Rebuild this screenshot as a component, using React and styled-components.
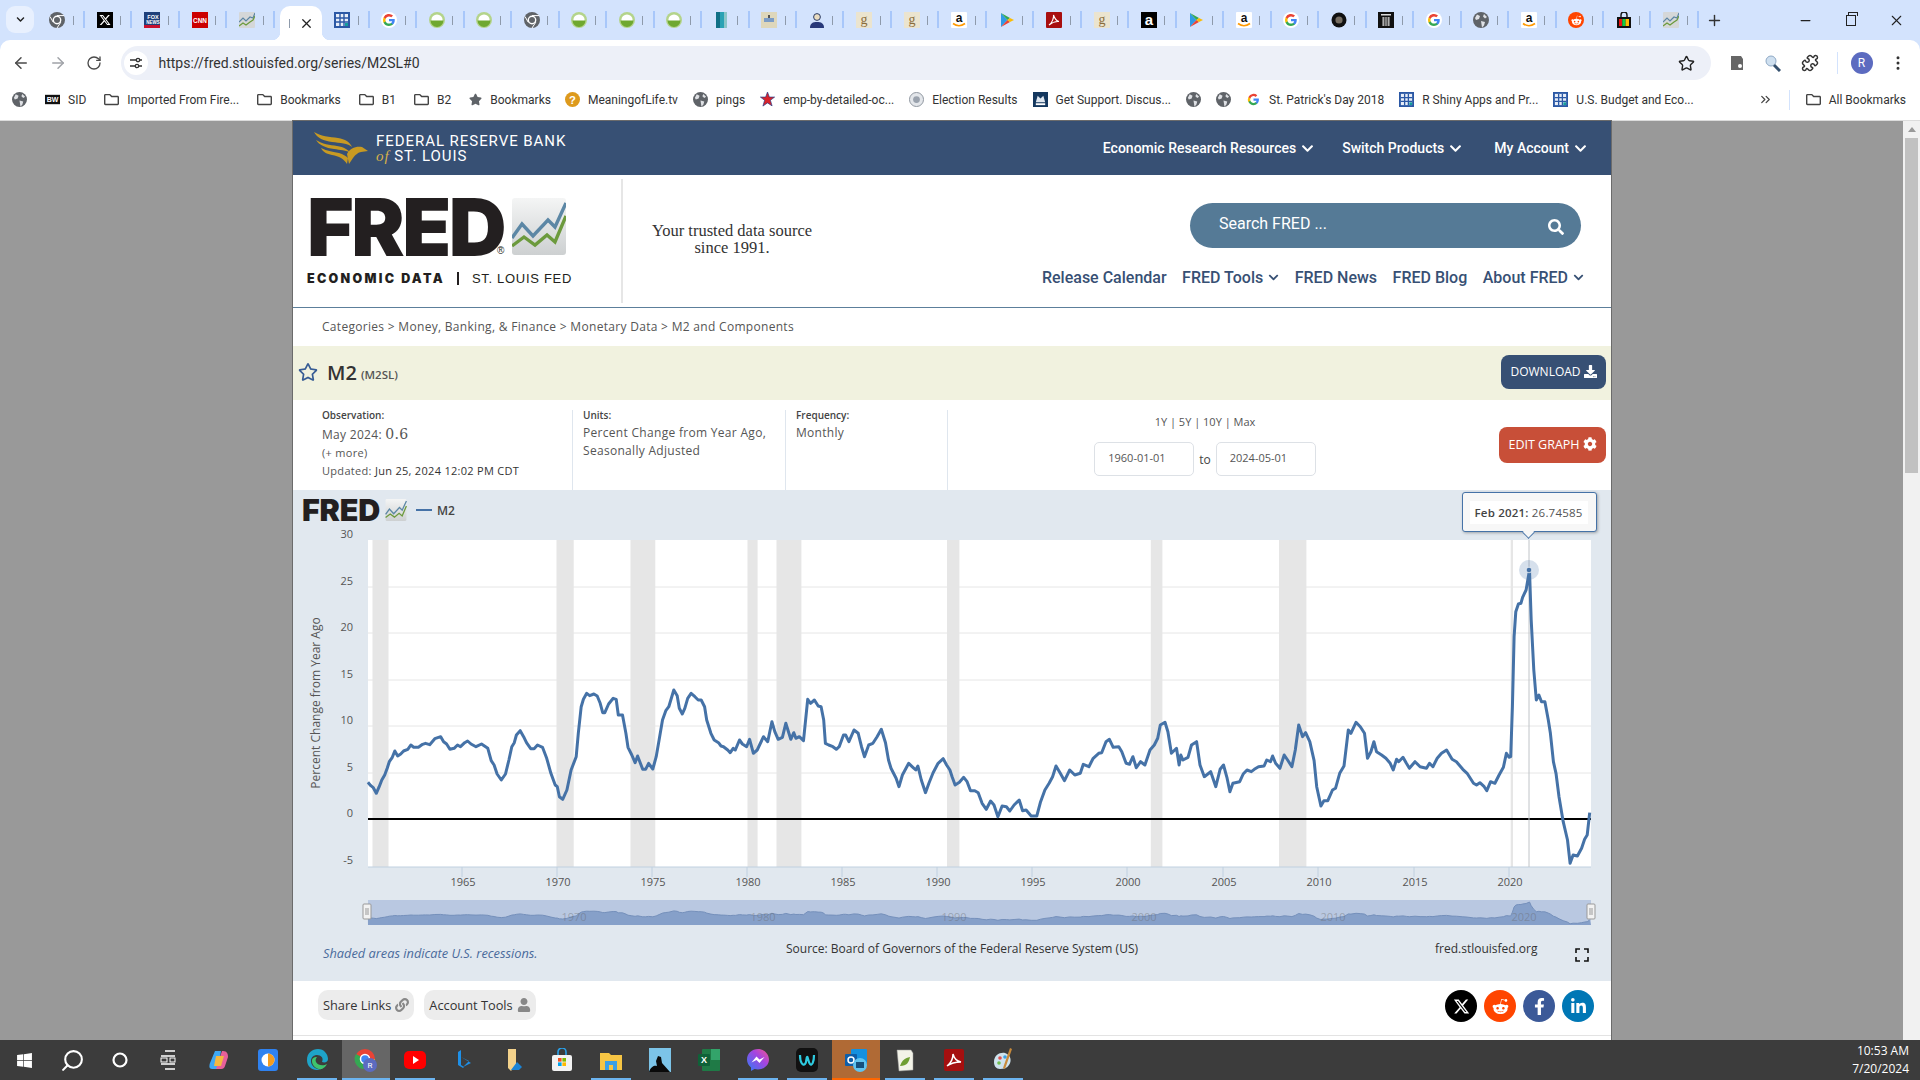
import React from 'react';
import styled, { createGlobalStyle } from 'styled-components';
import {
  FaChevronDown, FaSearch, FaRegStar, FaDownload, FaCog, FaLink, FaUser,
  FaRedditAlien, FaFacebookF, FaLinkedinIn, FaStar, FaRegFolder, FaWindows,
} from 'react-icons/fa';
import { FaXTwitter } from 'react-icons/fa6';
import { ArrowLeft, ArrowRight, RotateCw, Star, MoreVertical, Minus, Plus, X, Search, Puzzle, ChevronsRight } from 'lucide-react';

const GlobalStyle = createGlobalStyle`
  html, body { margin: 0; padding: 0; }
  body { width: 1920px; height: 1080px; overflow: hidden; font-family: "Open Sans", sans-serif; background: #999; }
  * { box-sizing: border-box; }
`;

// traced off the graph, in page pixels once toPage has run
const traceLeft = [[185,787],[192,797],[198,803],[205,820],[212,800],[218,780],[225,765],[231,745],[236,725],[243,712],[249,693],[256,708],[263,702],[270,693],[280,688],[287,675],[294,682],[305,682],[315,673],[322,670],[332,674],[344,656],[358,650],[365,665],[372,672],[380,688],[390,685],[398,675],[405,680],[415,668],[422,663],[430,672],[442,680],[455,672],[470,685],[478,722],[485,735],[492,762],[502,780],[512,762],[520,720],[527,680],[533,668],[538,645],[547,632],[555,650],[562,668],[572,686],[580,686],[588,675],[600,682],[610,715],[620,760],[630,795],[635,800],[640,830],[648,838],[658,810],[668,750],[680,710],[685,640],[692,560],[697,538],[705,520],[712,527],[722,522],[730,528],[737,550],[743,578],[748,578],[757,552],[768,535],[775,538],[780,585],[790,585],[798,640],[803,682],[812,705],[820,728],[826,708],[832,728],[838,748],[845,748],[852,730],[862,747],[870,710],[877,660],[885,600],[893,572],[900,560],[912,510],[920,527],[925,565],[932,582],[938,565],[945,535],[953,520],[962,530],[970,540],[977,540],[985,560],[990,600],[1000,640],[1008,660],[1018,668],[1024,678],[1030,680],[1040,690],[1046,698],[1053,685],[1058,690],[1068,660],[1075,672],[1085,680],[1092,658],[1101,700],[1110,690],[1125,650],[1135,665],[1145,605],[1152,635],[1160,658],[1170,652],[1178,610],[1190,658],[1197,638],[1202,655],[1210,650],[1220,662],[1230,538],[1237,550],[1246,540],[1255,558],[1262,560],[1268,600],[1272,670],[1280,675],[1290,680],[1298,688],[1305,680],[1315,645],[1320,645],[1328,665],[1340,630],[1350,640],[1358,680],[1365,710],[1375,675],[1385,670],[1395,650],[1405,628],[1415,668],[1422,720],[1428,745],[1440,775],[1447,800],[1455,765],[1470,730],[1480,742],[1487,750],[1492,738],[1500,780],[1510,818],[1518,790],[1528,758],[1540,730],[1552,716],[1560,735],[1568,750]];
const traceRight = [[5,770],[12,795],[22,787],[32,772],[40,785],[48,812],[58,812],[66,818],[75,850],[85,868],[95,843],[103,855],[112,890],[122,858],[132,860],[140,873],[150,855],[162,840],[170,872],[178,870],[190,888],[203,888],[212,845],[222,810],[232,790],[240,770],[248,738],[258,760],[268,782],[280,750],[292,765],[305,760],[312,733],[325,740],[335,715],[348,700],[355,698],[365,665],[373,658],[382,682],[395,680],[402,695],[412,730],[420,733],[428,710],[436,743],[446,725],[456,735],[468,690],[478,675],[486,655],[492,615],[503,607],[510,635],[518,700],[530,685],[536,735],[540,705],[545,720],[557,712],[565,675],[577,665],[585,735],[595,770],[610,755],[622,800],[632,748],[640,735],[648,772],[655,815],[662,790],[678,785],[686,762],[695,750],[705,755],[712,748],[722,740],[735,738],[741,720],[750,725],[755,708],[762,730],[772,745],[782,705],[790,720],[800,740],[808,690],[816,615],[825,650],[832,638],[842,665],[852,722],[858,800],[864,835],[868,858],[875,842],[884,842],[895,810],[902,805],[912,760],[922,738],[932,630],[938,640],[950,607],[960,620],[970,640],[977,715],[985,695],[992,665],[998,695],[1010,705],[1020,715],[1030,730],[1037,750],[1045,718],[1050,725],[1060,712],[1068,730],[1075,745],[1088,725],[1100,740],[1115,745],[1122,730],[1130,740],[1140,715],[1150,700],[1162,690],[1175,718],[1185,725],[1200,748],[1210,760],[1225,790],[1232,795],[1240,788],[1250,800],[1256,812],[1265,785],[1275,790],[1285,765],[1295,742],[1302,700],[1308,712],[1312,710],[1316,560],[1320,350],[1324,275],[1330,252],[1336,250],[1340,232],[1348,210],[1356,150],[1360,300],[1366,450],[1372,540],[1378,525],[1384,545],[1392,545],[1400,600],[1405,640],[1412,725],[1418,760],[1425,830],[1435,905],[1445,960],[1451,1030],[1458,1005],[1468,1008],[1478,985],[1485,958],[1491,945],[1497,878]];

const toPage = () => [
  ...traceLeft.map(([x, y]) => [290 + x / 2.376, 520 + y / 3]),
  ...traceRight.map(([x, y]) => [950 + x / 2.34, 520 + y / 3]),
];
const series = toPage();
const linePoints = series.map(([x, y]) => `${x.toFixed(1)},${y.toFixed(1)}`).join(' ');
const navY = (y) => 902 + ((y - 570) * 22) / 296;
const navLine = series.map(([x, y]) => `${x.toFixed(1)},${navY(y).toFixed(1)}`).join(' ');
const navArea = `368,925 ${navLine} 1591,925`;

const grid = [587, 633, 680, 726, 773];
const yLabels = [['30', 538], ['25', 585], ['20', 631], ['15', 678], ['10', 724], ['5', 771], ['0', 817], ['-5', 864]];
const xLabels = [['1965', 462], ['1970', 557], ['1975', 652], ['1980', 747], ['1985', 842], ['1990', 937], ['1995', 1032], ['2000', 1127], ['2005', 1223], ['2010', 1318], ['2015', 1414], ['2020', 1509]];
const recessions = [[372.5, 388.5], [556.5, 573.7], [630.5, 655.3], [747.5, 757.6], [776.5, 801.4], [947, 959.4], [1150.8, 1162.4], [1279, 1306.4], [1510.7, 1513]];
const navYears = [['1970', 574], ['1980', 763], ['1990', 954], ['2000', 1144], ['2010', 1333], ['2020', 1524]];

const Favicon = ({ kind, size = 16 }) => {
  const svg = (children) => <svg width={size} height={size} viewBox="0 0 16 16">{children}</svg>;
  switch (kind) {
    case 'chrome':
      return svg(<><circle cx="8" cy="8" r="8" fill="#5f6368" /><circle cx="8" cy="8" r="4.4" fill="#fff" /><circle cx="8" cy="8" r="3" fill="#5f6368" /><path d="M8 3.6h7M4.2 10.2L1 4.5M11.8 10.2L8 16" stroke="#fff" strokeWidth="1" /></>);
    case 'x':
      return svg(<><rect width="16" height="16" fill="#000" /><path transform="translate(2.500 2.500) scale(.69)" d="M12.6.75h2.454l-5.36 6.142L16 15.25h-4.937l-3.867-5.07-4.425 5.07H.316l5.733-6.57L0 .75h5.063l3.495 4.633L12.601.75Zm-.86 13.028h1.36L4.323 2.145H2.865z" fill="#fff" /></>);
    case 'fox':
      return svg(<><rect width="16" height="16" fill="#1e3f7a" /><rect y="13" width="16" height="3" fill="#c8102e" /><text x="9" y="7" fontSize="5.500" fontWeight="700" fill="#fff" textAnchor="middle" fontFamily="Liberation Sans">FOX</text><text x="9" y="12" fontSize="4.500" fontWeight="700" fill="#fff" textAnchor="middle" fontFamily="Liberation Sans">NEWS</text></>);
    case 'cnn':
      return svg(<><rect width="16" height="16" fill="#cc0000" /><text x="8" y="10.5" fontSize="6.4" fontWeight="700" fill="#fff" textAnchor="middle" fontFamily="Liberation Sans">CNN</text></>);
    case 'chart':
      return svg(<><rect width="16" height="16" rx="1" fill="#d5d7d8" /><path d="M0 10L4 6l3 3 4-4 3 1 2-5" fill="none" stroke="#5b84a3" strokeWidth="1.2" /><path d="M0 14l4-3 3 2 4-3 3-2 2-4" fill="none" stroke="#6b9a3b" strokeWidth="1.2" /></>);
    case 'grid':
      return svg(<><rect width="16" height="16" fill="#2b58a5" /><rect x="2" y="2" width="12" height="12" fill="#e8eef8" /><path d="M6 2v12M10 2v12M2 6h12M2 10h12" stroke="#2b58a5" strokeWidth="1.4" /><rect x="11" y="11" width="3" height="3" fill="#149c9c" /></>);
    case 'google':
      return svg(<><circle cx="8" cy="8" r="8" fill="#fff" /><g transform="translate(2 2) scale(.75)">
        <path fill="#4285F4" d="M15.68 8.18c0-.57-.05-1.11-.15-1.64H8v3.1h4.3a3.68 3.68 0 0 1-1.6 2.41v2h2.58c1.51-1.39 2.4-3.44 2.4-5.87z" />
        <path fill="#34A853" d="M8 16c2.16 0 3.97-.72 5.29-1.94l-2.58-2c-.72.48-1.63.76-2.71.76-2.08 0-3.85-1.41-4.48-3.3H.85v2.07A8 8 0 0 0 8 16z" />
        <path fill="#FBBC05" d="M3.52 9.52a4.8 4.8 0 0 1 0-3.04V4.41H.85a8 8 0 0 0 0 7.18z" />
        <path fill="#EA4335" d="M8 3.18c1.17 0 2.23.4 3.06 1.2l2.29-2.3A8 8 0 0 0 .85 4.41l2.67 2.07C4.15 4.59 5.92 3.18 8 3.18z" />
      </g></>);
    case 'green':
      return svg(<><circle cx="8" cy="8" r="8" fill="#b4d48b" /><circle cx="8" cy="8" r="5.6" fill="#fff" /><path d="M1.5 8.5h13A6.5 6.5 0 0 1 1.5 8.5z" fill="#6fa82f" /></>);
    case 'book':
      return svg(<><rect x="2" width="4" height="16" fill="#0f6f86" /><rect x="6" width="4" height="16" fill="#2aa2b4" /><rect x="10" width="3" height="16" fill="#8cc6c9" /></>);
    case 'note':
      return svg(<><rect width="16" height="16" fill="#ded7bb" /><rect x="3" y="6" width="10" height="4" fill="#7b9cc6" /><rect x="7" y="3" width="2" height="3" fill="#555" /></>);
    case 'person':
      return svg(<><circle cx="8" cy="5" r="3.4" fill="#e9dcc0" stroke="#2a3b66" /><path d="M1 16c0-5 3-6 7-6s7 1 7 6z" fill="#27387a" /></>);
    case 'g':
      return svg(<><rect width="16" height="16" fill="#ebe4cf" /><text x="8" y="12" fontSize="14" fill="#8a6d3b" textAnchor="middle" fontFamily="Liberation Serif">g</text></>);
    case 'amazon':
      return svg(<><rect width="16" height="16" rx="1" fill="#fff" /><text x="8" y="10" fontSize="12" fontWeight="700" fill="#111" textAnchor="middle" fontFamily="Liberation Sans">a</text><path d="M2 11.5c4 3 8 3 12 0" fill="none" stroke="#f90" strokeWidth="1.6" /></>);
    case 'play':
      return svg(<><path d="M2 1l6.4 7L2 15z" fill="#2f9be6" /><path d="M2 1l9 5-2.6 2z" fill="#34a853" /><path d="M2 15l9-5-2.6-2z" fill="#ea4335" /><path d="M11 6l4 2-4 2-2.6-2z" fill="#fbbc04" /></>);
    case 'pdf':
      return svg(<><rect width="16" height="16" rx="1" fill="#a80f0f" /><path d="M3 13c3-2 5-7 4.5-10 1 3 3 6 5.5 6.5-3-.3-7 1-10 3.5z" fill="none" stroke="#fff" strokeWidth="1.1" /></>);
    case 'blacka':
      return svg(<><rect width="16" height="16" fill="#000" /><text x="8" y="13" fontSize="15" fontWeight="700" fill="#fff" textAnchor="middle" fontFamily="Liberation Sans">a</text></>);
    case 'disc':
      return svg(<><circle cx="8" cy="8" r="7.5" fill="#111" /><circle cx="8" cy="8" r="3.6" fill="#776e62" /></>);
    case 'trash':
      return svg(<><rect width="16" height="16" fill="#111" /><rect x="3" y="2" width="10" height="1.5" fill="#ddd" /><path d="M4.5 5h7v9h-7z" fill="#ccc" /><path d="M6.3 5v9M8 5v9M9.7 5v9" stroke="#111" strokeWidth=".8" /></>);
    case 'globe':
      return svg(<><circle cx="8" cy="8" r="8" fill="#5f6368" /><path d="M4 2.5l3 1.5-1 3-3 1-1-2zM8 9l4 1-1 3.5-2 2zM11 2l3 3-2 1.5-2-2z" fill="#dfe1e5" /></>);
    case 'reddit':
      return <RedditMark $size={size}><FaRedditAlien /></RedditMark>;
    case 'shop':
      return svg(<><path d="M5 5V3a3 3 0 0 1 6 0v2" fill="none" stroke="#111" strokeWidth="1.4" /><rect x="1" y="5" width="14" height="11" fill="#111" /><rect x="3" y="7" width="3.3" height="7" fill="#e11" /><rect x="6.3" y="7" width="3.3" height="7" fill="#1c4" /><rect x="9.6" y="7" width="3.4" height="7" fill="#fb0" /></>);
    case 'bw':
      return svg(<><rect y="3" width="16" height="10" fill="#111" /><text x="8" y="11" fontSize="7.5" fontWeight="700" fill="#fff" textAnchor="middle" fontFamily="Liberation Sans">BW</text></>);
    case 'question':
      return svg(<><circle cx="8" cy="8" r="8" fill="#dd9a1d" /><text x="8" y="12.5" fontSize="12" fontWeight="700" fill="#fff" textAnchor="middle" fontFamily="Liberation Sans">?</text></>);
    case 'flag':
      return svg(<path d="M8 0l2 5.4h5.6l-4.5 3.4 1.8 6L8 11.6 3.1 15l1.8-6.2L.4 5.4H6z" fill="#d8232a" stroke="#1e3a8a" strokeWidth=".7" />);
    case 'seal':
      return svg(<><circle cx="8" cy="8" r="7.5" fill="#e3e6ea" stroke="#8b929c" /><circle cx="8" cy="8" r="3.6" fill="#9aa2ad" /></>);
    case 'usaa':
      return svg(<><rect width="16" height="16" fill="#14375e" /><path d="M3 11l2-7 3 3 3-3 2 7z" fill="#dfe7f0" /><rect x="3" y="12" width="10" height="2" fill="#fff" /></>);
    default:
      return null;
  }
};

const RedditMark = styled.span`
  width: ${(p) => p.$size}px;
  height: ${(p) => p.$size}px;
  border-radius: 50%;
  background: #ff4500;
  color: #fff;
  display: flex;
  align-items: center;
  justify-content: center;
  font-size: ${(p) => p.$size - 5}px;
`;

const tabs = ['chrome', 'x', 'fox', 'cnn', 'chart', 'active', 'grid', 'google', 'green', 'green', 'chrome', 'green', 'green', 'green', 'book', 'note', 'person', 'g', 'g', 'amazon', 'play', 'pdf', 'g', 'blacka', 'play', 'amazon', 'google', 'disc', 'trash', 'google', 'globe', 'amazon', 'reddit', 'shop', 'chart'];

const pinnedMarks = [
  { icon: 'globe' },
  { icon: 'bw', label: 'SID' },
  { folder: true, label: 'Imported From Fire...' },
  { folder: true, label: 'Bookmarks' },
  { folder: true, label: 'B1' },
  { folder: true, label: 'B2' },
  { star: true, label: 'Bookmarks' },
];

const siteMarks = [
  { icon: 'question', label: 'MeaningofLife.tv' },
  { icon: 'globe', label: 'pings' },
  { icon: 'flag', label: 'emp-by-detailed-oc...' },
  { icon: 'seal', label: 'Election Results' },
  { icon: 'usaa', label: 'Get Support. Discus...' },
  { icon: 'globe' },
  { icon: 'globe' },
  { icon: 'google', label: "St. Patrick's Day 2018" },
  { icon: 'grid', label: 'R Shiny Apps and Pr...' },
  { icon: 'grid', label: 'U.S. Budget and Eco...' },
];

const Mark = ({ b }) => (
  <BookmarkItem>
    {b.folder && <FaRegFolder size={15} color="#444" />}
    {b.star && <FaStar size={13} color="#5f6368" />}
    {b.icon && <Favicon kind={b.icon} size={15} />}
    {b.label && <span>{b.label}</span>}
  </BookmarkItem>
);

const TaskIcon = ({ kind }) => {
  const svg = (children) => <svg width="24" height="24" viewBox="0 0 24 24">{children}</svg>;
  switch (kind) {
    case 'windows': return <FaWindows size={17} color="#fff" />;
    case 'search': return <MirrorSearch><Search size={25} color="#fff" strokeWidth={2} /></MirrorSearch>;
    case 'cortana': return svg(<circle cx="12" cy="12" r="6.5" fill="none" stroke="#fff" strokeWidth="2.2" />);
    case 'taskview': return svg(<><path d="M5 8h14M9 3h10M5 16h14M9 21h10" stroke="#fff" strokeWidth="1.3" /><rect x="5" y="10" width="6" height="4" fill="none" stroke="#fff" /><rect x="14" y="10" width="5" height="4" fill="none" stroke="#fff" /></>);
    case 'copilot': return svg(<><path d="M8 3h6l-3 18H5c-3 0-3-3-2-6z" fill="#3fa9f5" /><path d="M16 3c4 0 5 3 5 6l-3 9c-1 3-3 3-5 3H9l6-18z" fill="#e8609a" /><path d="M9 8h8l-3 10H7z" fill="#f4b840" /></>);
    case 'wps': return svg(<><rect x="2" y="1" width="20" height="22" rx="3" fill="#2f82f0" /><circle cx="12" cy="12" r="6.5" fill="#fff" /><path d="M12 5.5a6.5 6.5 0 0 1 0 13z" fill="#f39c1f" /></>);
    case 'edge': return svg(<><path d="M2 12C2 5 7 1 13 1c6 0 10 5 10 10 0 3-3 4-6 3 2-4-1-7-5-7-3 0-6 2-6 6 0 5 5 9 10 8-6 3-14-1-14-9z" fill="#1ea4c9" /><path d="M7 13c0 5 5 9 10 8 2-1 4-3 5-5-3 2-9 2-11-2-1-2 0-4 1-5-3 0-5 1-5 4z" fill="#3ec46d" /></>);
    case 'chrome': return svg(<><circle cx="11" cy="11" r="10" fill="#ea4335" /><path d="M11 11L2 6a10 10 0 0 0 9 15z" fill="#34a853" /><path d="M11 11h10a10 10 0 0 1-10 10z" fill="#fbbc04" /><circle cx="11" cy="11" r="4.5" fill="#4285f4" stroke="#fff" strokeWidth="1.5" /><circle cx="16" cy="17" r="7" fill="#5c6bc0" /><text x="16" y="20" fontSize="8" fill="#fff" textAnchor="middle" fontFamily="Roboto">R</text></>);
    case 'youtube': return svg(<><rect x="1" y="3" width="22" height="18" rx="5" fill="#f00" /><path d="M10 8l6 4-6 4z" fill="#fff" /></>);
    case 'bing': return svg(<path d="M9 2v15l3 2-1 1-5-3V4zM9 9l8 4-6 6 8-4z" fill="#1e90e8" />);
    case 'file': return svg(<><path d="M7 1h8v16l-5 6-3-3z" fill="#f3d28b" /><path d="M10 22l6-8 5 5-3 3z" fill="#1b84d6" /></>);
    case 'store': return svg(<><path d="M8 7V4a4 4 0 0 1 8 0v3" fill="none" stroke="#2aa0e8" strokeWidth="1.6" /><rect x="2" y="7" width="20" height="16" rx="2" fill="#f3f3f3" /><rect x="8" y="10" width="3.6" height="3.6" fill="#f25022" /><rect x="12.4" y="10" width="3.6" height="3.6" fill="#7fba00" /><rect x="8" y="14.4" width="3.6" height="3.6" fill="#00a4ef" /><rect x="12.4" y="14.4" width="3.6" height="3.6" fill="#ffb900" /></>);
    case 'explorer': return svg(<><path d="M1 5h9l2 2h11v15H1z" fill="#f6c544" /><path d="M6 13h12v9H6z" fill="#3aa0e6" /><rect x="10" y="17" width="4" height="5" fill="#f6c544" /></>);
    case 'kindle': return svg(<><rect x="1" y="0" width="22" height="24" fill="#7cc4e8" /><path d="M1 24c2-6 6-7 8-6l-1-5 2-5 3 1 1 6 8 9z" fill="#0a0a0a" /></>);
    case 'excel': return svg(<><rect x="5" y="1" width="18" height="22" rx="1" fill="#1f7a46" /><rect x="14" y="1" width="9" height="11" fill="#33a46a" /><rect x="1" y="6" width="12" height="12" rx="1" fill="#0f6138" /><text x="7" y="15" fontSize="9" fontWeight="700" fill="#fff" textAnchor="middle" fontFamily="Liberation Sans">X</text></>);
    case 'messenger': return svg(<><defs><linearGradient id="msg" x1="0" y1="1" x2="1" y2="0"><stop offset="0" stopColor="#2f7cf6" /><stop offset=".6" stopColor="#a544e0" /><stop offset="1" stopColor="#f5568b" /></linearGradient></defs><path d="M12 1C6 1 1 5.500 1 11.500c0 3.200 1.500 6 4 8V23l3.600-2c1 .3 2.200.5 3.400.5 6 0 11-4.500 11-10S18 1 12 1z" fill="url(#msg)" /><path d="M5.500 14.500l5-6 3 3 5-2.500-5 6-3-3z" fill="#fff" /></>);
    case 'webex': return svg(<><rect x="1" y="0" width="22" height="24" rx="5" fill="#111" /><path d="M5 7c0 8 3 11 5 9s1-6 2-7 1 5 3 7 4-2 4-9" fill="none" stroke="#2ecbe0" strokeWidth="2.2" /></>);
    case 'outlook': return svg(<><rect x="7" y="1" width="16" height="15" rx="1" fill="#1490df" /><rect x="1" y="6" width="12" height="12" rx="1" fill="#0f5ea8" /><circle cx="7" cy="12" r="3" fill="none" stroke="#fff" strokeWidth="1.5" /><circle cx="16" cy="17" r="7" fill="#60c4f0" /><rect x="12" y="14" width="8" height="6" fill="#14507e" /></>);
    case 'notepad': return svg(<><path d="M4 2h14l2 3v17l-14 1z" fill="#f3f3e8" stroke="#999" strokeWidth=".5" /><path d="M7 18c2-6 5-8 10-9-1 5-3 9-10 9z" fill="#6f9e32" /></>);
    case 'acrobat': return svg(<><rect x="2" y="1" width="20" height="22" rx="2" fill="#a50f0f" /><path d="M5 18c4-3 6-8 6-12 1 4 3 7 8 8-5 0-10 1-14 4z" fill="none" stroke="#fff" strokeWidth="1.5" /></>);
    case 'paint': return svg(<><path d="M3 14c0-7 6-10 11-9 6 2 7 8 4 12-2 3-5 4-9 4-4 0-6-3-6-7z" fill="#cfe3ee" /><circle cx="9" cy="10" r="1.800" fill="#e05050" /><circle cx="14" cy="9" r="1.800" fill="#3aa0e6" /><circle cx="8" cy="15" r="1.800" fill="#6fbf50" /><path d="M19 0l2 1-7 20-2-1z" fill="#c98a3a" /></>);
    default: return null;
  }
};

const MirrorSearch = styled.span`
  display: flex;
  transform: scaleX(-1);
`;

const taskItems = [
  { kind: 'wps' }, { kind: 'edge', open: true }, { kind: 'chrome', open: true, active: true },
  { kind: 'youtube', open: true }, { kind: 'bing' }, { kind: 'file' }, { kind: 'store' },
  { kind: 'explorer', open: true }, { kind: 'kindle' }, { kind: 'excel' },
  { kind: 'messenger', open: true }, { kind: 'webex', open: true },
  { kind: 'outlook', flash: true }, { kind: 'notepad', open: true }, { kind: 'acrobat', open: true }, { kind: 'paint', open: true },
];

const ChartMark = ({ w, h }) => (
  <svg width={w} height={h} viewBox="0 0 54 57">
    <defs>
      <linearGradient id="markBg" x1="0" y1="0" x2="0" y2="1">
        <stop offset="0" stopColor="#f4f5f5" />
        <stop offset="1" stopColor="#cdd0d1" />
      </linearGradient>
    </defs>
    <rect width="54" height="57" rx="3" fill="url(#markBg)" />
    <path d="M0 40l10-14 11 12 15-16 7 7 11-24" fill="none" stroke="#5c87a5" strokeWidth="3.4" />
    <path d="M0 48l12-9 11 8 12-10 8 7 11-26" fill="none" stroke="#6c9a3d" strokeWidth="3.4" />
  </svg>
);

export default function App() {
  return (
    <Shell>
      <GlobalStyle />
      <TabStrip>
        <TabListButton><FaChevronDown /></TabListButton>
        {tabs.map((kind, i) =>
          kind === 'active' ? (
            <ActiveTab key={i}><TabHint /><X size={15} color="#222" /></ActiveTab>
          ) : (
            <Tab key={i}><Favicon kind={kind} /><TabHint /></Tab>
          ),
        )}
        <NewTab><Plus size={17} color="#333" /></NewTab>
        <WindowControls>
          <Minus size={15} color="#222" />
          <RestoreIcon />
          <X size={17} color="#222" strokeWidth={1.5} />
        </WindowControls>
      </TabStrip>

      <Toolbar>
        <NavButton><ArrowLeft size={18} color="#4a4a4a" /></NavButton>
        <NavButton><ArrowRight size={18} color="#a0a3a8" /></NavButton>
        <NavButton><RotateCw size={16} color="#4a4a4a" /></NavButton>
        <AddressBar>
          <SiteInfo>
            <svg width="16" height="16" viewBox="0 0 16 16"><path d="M2 5h6M11 11h3M2 11h5M12 5h2" stroke="#333" strokeWidth="1.6" /><circle cx="10" cy="5" r="1.700" fill="none" stroke="#333" strokeWidth="1.3" /><circle cx="9" cy="11" r="1.700" fill="none" stroke="#333" strokeWidth="1.3" /></svg>
          </SiteInfo>
          <Url>https://fred.stlouisfed.org/series/M2SL#0</Url>
          <BookmarkStar><Star size={17} color="#222" strokeWidth={2} /></BookmarkStar>
        </AddressBar>
        <ToolbarIcons>
          <svg width="16" height="18" viewBox="0 0 16 18"><path d="M2 2h10l2 3v11H2z" fill="#666" /><circle cx="11" cy="12" r="2" fill="#fff" /></svg>
          <svg width="18" height="18" viewBox="0 0 18 18"><circle cx="7" cy="7" r="5" fill="#cfe0f0" stroke="#8fa9c5" /><path d="M10 11l6 6" stroke="#35506e" strokeWidth="3" /></svg>
          <Puzzle size={18} color="#333" />
          <ToolbarDivider />
          <Avatar>R</Avatar>
          <MoreVertical size={18} color="#333" />
        </ToolbarIcons>
      </Toolbar>

      <BookmarkBar>
        <BookmarkGroup $gap={18}>
          {pinnedMarks.map((b, i) => <Mark key={i} b={b} />)}
        </BookmarkGroup>
        <BookmarkGroup $gap={15}>
          {siteMarks.map((b, i) => <Mark key={i} b={b} />)}
        </BookmarkGroup>
        <MoreBookmarks>
          <ChevronsRight size={15} color="#444" />
          <BookmarkDivider />
          <BookmarkItem><FaRegFolder size={15} color="#444" /><span>All Bookmarks</span></BookmarkItem>
        </MoreBookmarks>
      </BookmarkBar>

      <Viewport>
        <Page>
          <FedBar>
            <FedLogo>
              <svg width="54" height="33" viewBox="0 0 54 33">
                <path d="M0 0c6 4 16 5 24 6 7 1 12 4 14 9-4-4-12-4-20-5C10 9 3 6 0 0z" fill="#c89a22" />
                <path d="M2 8c6 4 14 5 21 6 7 1 11 4 14 7-5-3-11-3-17-4C12 16 5 13 2 8z" fill="#c89a22" />
                <path d="M7 16c6 3 13 4 18 5 4 1 7 3 9 5l-1 6c-3-5-8-8-15-9-5-1-9-3-11-7z" fill="#c89a22" />
                <path d="M33 22c3-6 9-8 15-7l6 4-7 1c-2 0-6 3-8 6l-4 6z" fill="#c89a22" />
              </svg>
              <FedName>
                <span>FEDERAL RESERVE BANK</span>
                <span><FedOf>of</FedOf> ST. LOUIS</span>
              </FedName>
            </FedLogo>
            <FedNav>
              <FedLink $gap={28}>Economic Research Resources <FaChevronDown /></FedLink>
              <FedLink $gap={32}>Switch Products <FaChevronDown /></FedLink>
              <FedLink>My Account <FaChevronDown /></FedLink>
            </FedNav>
          </FedBar>

          <Masthead>
            <Brand>
              <FredRow>
                <FredWord>FRED</FredWord>
                <Registered>®</Registered>
                <ChartMark w={54} h={57} />
              </FredRow>
              <BrandLine>
                <b>ECONOMIC DATA</b>
                <i />
                <span>ST. LOUIS FED</span>
              </BrandLine>
            </Brand>
            <Tagline>Your trusted data source<br />since 1991.</Tagline>
            <MastRight>
              <SearchBox>
                <span>Search FRED ...</span>
                <FaSearch />
              </SearchBox>
              <MainNav>
                <MainLink>Release Calendar</MainLink>
                <MainLink>FRED Tools <FaChevronDown /></MainLink>
                <MainLink>FRED News</MainLink>
                <MainLink>FRED Blog</MainLink>
                <MainLink>About FRED <FaChevronDown /></MainLink>
              </MainNav>
            </MastRight>
          </Masthead>

          <Crumbs>Categories &gt; Money, Banking, &amp; Finance &gt; Monetary Data &gt; M2 and Components</Crumbs>

          <TitleBand>
            <StarIcon><FaRegStar /></StarIcon>
            <SeriesTitle>M2</SeriesTitle>
            <SeriesId>(M2SL)</SeriesId>
            <DownloadButton>DOWNLOAD <FaDownload /></DownloadButton>
          </TitleBand>

          <MetaRow>
            <MetaCol $w={279} $pad={29}>
              <MetaLabel>Observation:</MetaLabel>
              <ObsValue>May 2024: <b>0.6</b></ObsValue>
              <MetaSmall>(+ more)</MetaSmall>
              <MetaSmall>Updated: <em>Jun 25, 2024 12:02 PM CDT</em></MetaSmall>
            </MetaCol>
            <MetaCol $w={213} $pad={10} $rule>
              <MetaLabel>Units:</MetaLabel>
              <MetaText>Percent Change from Year Ago,<br />Seasonally Adjusted</MetaText>
            </MetaCol>
            <MetaCol $w={162} $pad={10} $rule>
              <MetaLabel>Frequency:</MetaLabel>
              <MetaText>Monthly</MetaText>
            </MetaCol>
            <RangeCol>
              <RangeLinks>1Y | 5Y | 10Y | Max</RangeLinks>
              <DateRow>
                <DateBox>1960-01-01</DateBox>
                <span>to</span>
                <DateBox>2024-05-01</DateBox>
              </DateRow>
            </RangeCol>
            <EditCol>
              <EditButton>EDIT GRAPH <FaCog /></EditButton>
            </EditCol>
          </MetaRow>

          <ChartPanel>
            <ChartWrap>
              <ChartLegend>
                <SmallFred>FRED</SmallFred>
                <ChartMark w={22} h={22} />
                <LegendKey />
                <LegendName>M2</LegendName>
              </ChartLegend>
              <Tooltip><TooltipText><b>Feb 2021:</b> 26.74585</TooltipText></Tooltip>
              <TooltipArrow />
              <svg width="1318" height="440" viewBox="293 490 1318 440">
                <rect x="368" y="540" width="1223" height="327" fill="#fff" />
                {recessions.map(([a, b]) => <rect key={a} x={a} y="540" width={b - a} height="327" fill="#e6e6e6" />)}
                {grid.map((y) => <line key={y} x1="368" x2="1591" y1={y} y2={y} stroke="#e6e6e6" />)}
                <line x1="368" x2="1591" y1="867" y2="867" stroke="#c0d0e0" />
                {xLabels.map(([t, x]) => <line key={t} x1={x} x2={x} y1="867" y2="877" stroke="#c0d0e0" />)}
                <line x1="368" x2="1591" y1="819" y2="819" stroke="#000" strokeWidth="2" />
                <line x1="1529" x2="1529" y1="540" y2="867" stroke="#c0c4c8" />
                <polyline points={linePoints} fill="none" stroke="#4572a7" strokeWidth="3" strokeLinejoin="round" />
                <circle cx="1529" cy="570" r="10" fill="#4572a7" fillOpacity=".22" />
                <circle cx="1529" cy="570" r="2.800" fill="#4572a7" stroke="#fff" strokeWidth=".7" />
                {yLabels.map(([t, y]) => <AxisText key={t} x="353" y={y} textAnchor="end">{t}</AxisText>)}
                {xLabels.map(([t, x]) => <AxisText key={t} x={x + 1} y="886" textAnchor="middle">{t}</AxisText>)}
                <AxisTitle transform="translate(320 703) rotate(-90)" textAnchor="middle">Percent Change from Year Ago</AxisTitle>

                <rect x="368" y="900" width="1223" height="25" fill="#b9c8e1" />
                <polygon points={navArea} fill="#86a0c9" />
                <polyline points={navLine} fill="none" stroke="#7590bb" />
                {navYears.map(([t, x]) => <NavText key={t} x={x} y="921" textAnchor="middle">{t}</NavText>)}
                {[367, 1591].map((x) => (
                  <g key={x}>
                    <rect x={x - 4} y="904" width="8" height="15" rx="1" fill="#f2f2f2" stroke="#999" />
                    <path d={`M${x - 1} 908v7M${x + 1} 908v7`} stroke="#999" />
                  </g>
                ))}
              </svg>
            </ChartWrap>
            <ChartFoot>
              <ShadedNote>Shaded areas indicate U.S. recessions.</ShadedNote>
              <FootText>Source: Board of Governors of the Federal Reserve System (US)</FootText>
              <FootText>fred.stlouisfed.org</FootText>
              <svg width="14" height="14" viewBox="0 0 14 14"><path d="M1 5V1h4M9 1h4v4M13 9v4H9M5 13H1V9" fill="none" stroke="#111" strokeWidth="1.6" /></svg>
            </ChartFoot>
          </ChartPanel>

          <ShareRow>
            <PillButton>Share Links <FaLink /></PillButton>
            <PillButton>Account Tools <FaUser /></PillButton>
            <SocialGroup>
              <SocialDot $bg="#000"><FaXTwitter /></SocialDot>
              <SocialDot $bg="#ff4500"><FaRedditAlien /></SocialDot>
              <SocialDot $bg="#3b5998"><FaFacebookF /></SocialDot>
              <SocialDot $bg="#0077b5"><FaLinkedinIn /></SocialDot>
            </SocialGroup>
          </ShareRow>
        </Page>
        <ScrollTrack>
          <ScrollArrow />
          <ScrollThumb />
        </ScrollTrack>
      </Viewport>

      <Taskbar>
        <TaskSlot $small><TaskIcon kind="windows" /></TaskSlot>
        <TaskSlot $small><TaskIcon kind="search" /></TaskSlot>
        <TaskSlot $small><TaskIcon kind="cortana" /></TaskSlot>
        <TaskSlot $small><TaskIcon kind="taskview" /></TaskSlot>
        <TaskSpacer />
        <TaskSlot><TaskIcon kind="copilot" /></TaskSlot>
        {taskItems.map((t, i) => (
          <TaskSlot key={i} $open={t.open} $active={t.active} $flash={t.flash}>
            <TaskIcon kind={t.kind} />
          </TaskSlot>
        ))}
        <Clock><span>10:53 AM</span><span>7/20/2024</span></Clock>
      </Taskbar>
    </Shell>
  );
}

const Shell = styled.div`
  width: 1920px;
  height: 1080px;
  display: flex;
  flex-direction: column;
  background: #d3e3fd;
`;

const TabStrip = styled.div`
  height: 40px;
  display: flex;
  align-items: flex-start;
  padding-left: 6px;
`;

const TabListButton = styled.div`
  width: 28px;
  height: 27px;
  margin: 6px 3.5px 0 0;
  border-radius: 9px;
  background: #e8f0fe;
  display: flex;
  align-items: center;
  justify-content: center;
  font-size: 9px;
  color: #222;
`;

const Tab = styled.div`
  width: 47.47px;
  height: 32px;
  margin-top: 4px;
  padding-left: 11.7px;
  display: flex;
  align-items: center;
  gap: 7.5px;
  position: relative;
  &::after {
    content: '';
    position: absolute;
    right: 0;
    top: 7px;
    height: 17px;
    width: 2px;
    background: #a8c7fa;
  }
`;

const TabHint = styled.span`
  width: 1px;
  height: 9px;
  background: #8e9aab;
`;

const ActiveTab = styled.div`
  width: 42px;
  height: 34px;
  margin: 6px 0.47px 0 5px;
  padding: 0 8px 0 9px;
  border-radius: 10px 10px 0 0;
  background: #fff;
  display: flex;
  align-items: center;
  justify-content: space-between;
  position: relative;
  &::before, &::after {
    content: '';
    position: absolute;
    bottom: 0;
    width: 8px;
    height: 8px;
  }
  &::before { left: -8px; background: radial-gradient(circle at 0 0, #d3e3fd 8px, #fff 8.5px); }
  &::after { right: -8px; background: radial-gradient(circle at 100% 0, #d3e3fd 8px, #fff 8.5px); }
`;

const NewTab = styled.div`
  width: 32px;
  height: 32px;
  margin-top: 4px;
  display: flex;
  align-items: center;
  justify-content: center;
`;

const WindowControls = styled.div`
  margin: 4px 0 0 auto;
  height: 32px;
  width: 122px;
  padding-right: 15px;
  display: flex;
  align-items: center;
  justify-content: space-between;
`;

const RestoreIcon = styled.span`
  width: 10px;
  height: 11px;
  border: 1.2px solid #222;
  position: relative;
  &::before {
    content: '';
    position: absolute;
    left: 1px;
    top: -4px;
    width: 8px;
    height: 3px;
    border: 1.2px solid #222;
    border-bottom: 0;
  }
`;

const Toolbar = styled.div`
  height: 45px;
  background: #fff;
  border-radius: 10px 10px 0 0;
  display: flex;
  align-items: flex-start;
  padding: 6px 0 0 3px;
`;

const NavButton = styled.div`
  width: 36.5px;
  height: 34px;
  display: flex;
  align-items: center;
  justify-content: center;
`;

const AddressBar = styled.div`
  width: 1590px;
  height: 34px;
  margin-left: 8px;
  border-radius: 17px;
  background: #edf0f8;
  display: flex;
  align-items: center;
  padding: 0 16px 0 3px;
`;

const SiteInfo = styled.span`
  width: 24px;
  height: 24px;
  border-radius: 50%;
  background: #fff;
  display: flex;
  align-items: center;
  justify-content: center;
`;

const Url = styled.span`
  margin-left: 11px;
  font: 14px Roboto, sans-serif;
  color: #333;
`;

const BookmarkStar = styled.span`
  margin-left: auto;
  display: flex;
`;

const ToolbarIcons = styled.div`
  height: 34px;
  margin-left: 18px;
  display: flex;
  align-items: center;
  gap: 19px;
`;

const ToolbarDivider = styled.span`
  width: 1px;
  height: 22px;
  margin: 0 -3px 0 -1px;
  background: #d3e3fd;
`;

const Avatar = styled.span`
  width: 22px;
  height: 22px;
  margin: 0 -3px;
  border-radius: 50%;
  background: #5c6bc0;
  color: #fff;
  font: 12px Roboto, sans-serif;
  display: flex;
  align-items: center;
  justify-content: center;
`;

const BookmarkBar = styled.div`
  height: 35px;
  background: #fff;
  display: flex;
  align-items: center;
  padding: 0 14px 6px 12px;
  gap: 14px;
`;

const BookmarkGroup = styled.div`
  display: flex;
  align-items: center;
  gap: ${(p) => p.$gap}px;
`;

const BookmarkItem = styled.div`
  display: flex;
  align-items: center;
  gap: 8px;
  font: 12px Roboto, sans-serif;
  color: #333;
  white-space: nowrap;
`;

const MoreBookmarks = styled.div`
  margin-left: auto;
  display: flex;
  align-items: center;
  gap: 16px;
`;

const BookmarkDivider = styled.span`
  width: 1px;
  height: 20px;
  background: #d3e3fd;
`;

const Viewport = styled.div`
  height: 920px;
  display: flex;
  background: #999;
  border-top: 1px solid #dcdcdc;
`;

const Page = styled.div`
  width: 1318px;
  margin-left: 293px;
  margin-right: 292px;
  height: 919px;
  overflow: hidden;
  background: #fff;
  box-shadow: 0 0 0 1px #6b6b6b;
  display: flex;
  flex-direction: column;
`;

const ScrollTrack = styled.div`
  width: 17px;
  background: #f1f1f1;
  padding: 0 2px;
`;

const ScrollArrow = styled.div`
  height: 17px;
  display: flex;
  justify-content: center;
  padding-top: 6px;
  &::before {
    content: '';
    width: 0;
    height: 0;
    border-left: 4px solid transparent;
    border-right: 4px solid transparent;
    border-bottom: 5px solid #999;
  }
`;

const ScrollThumb = styled.div`
  height: 335px;
  background: #c1c1c1;
`;

const FedBar = styled.div`
  height: 54px;
  flex: none;
  background: #375074;
  display: flex;
  align-items: center;
  justify-content: space-between;
  padding: 0 24px 0 21px;
`;

const FedLogo = styled.div`
  display: flex;
  align-items: center;
  gap: 8px;
`;

const FedName = styled.div`
  display: flex;
  flex-direction: column;
  margin-top: 3px;
  font: 400 15px/13px Roboto, sans-serif;
  letter-spacing: 0.95px;
  color: #fff;
`;

const FedOf = styled.span`
  font: italic 15px "Liberation Serif", serif;
  color: #d8b24a;
`;

const FedNav = styled.nav`
  display: flex;
  align-items: center;
`;

const FedLink = styled.a`
  font: 500 14px Roboto, sans-serif;
  color: #fff;
  margin-right: ${(p) => p.$gap || 0}px;
  display: flex;
  align-items: center;
  gap: 5px;
  svg { font-size: 13px; }
`;

const Masthead = styled.div`
  height: 133px;
  flex: none;
  border-bottom: 1px solid #5c7f9b;
  display: flex;
`;

const Brand = styled.div`
  width: 330px;
  height: 124px;
  margin-top: 4px;
  padding: 19px 0 0 14px;
  border-right: 2px solid #e6e6e6;
`;

const FredRow = styled.div`
  display: flex;
  align-items: flex-start;
  height: 57px;
`;

const FredWord = styled.span`
  font: 900 80px/57px Inter, sans-serif;
  letter-spacing: -2.5px;
  color: #231f20;
  width: 195px;
`;

const Registered = styled.span`
  font: 10px "Liberation Sans", sans-serif;
  color: #231f20;
  margin: 47px 0 0 -5px;
  width: 15px;
`;

const BrandLine = styled.div`
  margin-top: 16px;
  margin-left: 0;
  display: flex;
  align-items: center;
  color: #231f20;
  font-family: "Liberation Sans", sans-serif;
  font-size: 13px;
  b { font: 900 12.5px Inter, sans-serif; letter-spacing: 2.3px; }
  i { width: 2px; height: 13px; background: #231f20; margin: 0 13px 0 12px; }
  span { letter-spacing: 0.7px; }
`;

const Tagline = styled.div`
  width: 218px;
  padding-top: 47px;
  text-align: center;
  font: 16.5px/17px "Liberation Serif", serif;
  color: #333;
`;

const MastRight = styled.div`
  flex: 1;
  display: flex;
  flex-direction: column;
  align-items: flex-end;
  padding: 28px 30px 0 0;
`;

const SearchBox = styled.div`
  width: 391px;
  height: 45px;
  border-radius: 23px;
  background: #557a96;
  display: flex;
  align-items: center;
  justify-content: space-between;
  padding: 0 17px 5px 29px;
  font: 16px Roboto, sans-serif;
  color: #fff;
  svg { font-size: 16px; margin-top: 7px; }
`;

const MainNav = styled.nav`
  margin-top: 20px;
  margin-right: -3px;
  display: flex;
  gap: 15.5px;
`;

const MainLink = styled.a`
  font: 500 16px Roboto, sans-serif;
  color: #375074;
  display: flex;
  align-items: center;
  gap: 5px;
  svg { font-size: 11px; }
`;

const Crumbs = styled.div`
  height: 38px;
  flex: none;
  padding: 11px 0 0 29px;
  font-size: 12px;
  line-height: 16px;
  letter-spacing: 0.3px;
  color: #555;
`;

const TitleBand = styled.div`
  height: 54px;
  flex: none;
  background: #f1f2df;
  display: flex;
  align-items: center;
  padding: 0 5px 2px 5px;
`;

const StarIcon = styled.span`
  color: #375c94;
  font-size: 20px;
  display: flex;
  margin-right: 9px;
`;

const SeriesTitle = styled.h1`
  margin: 0 4px 0 0;
  font: 600 20px "Open Sans", sans-serif;
  color: #333;
`;

const SeriesId = styled.span`
  font: 600 11.5px "Open Sans", sans-serif;
  color: #555;
  margin-top: 4px;
`;

const DownloadButton = styled.button`
  margin-left: auto;
  width: 105px;
  height: 34px;
  border: 0;
  border-radius: 8px;
  background: #375074;
  color: #fff;
  font: 12px "Open Sans", sans-serif;
  display: flex;
  align-items: center;
  justify-content: center;
  gap: 3px;
  padding: 0 0 2px;
  svg { font-size: 13px; }
`;

const MetaRow = styled.div`
  height: 90px;
  flex: none;
  display: flex;
`;

const MetaCol = styled.div`
  width: ${(p) => p.$w}px;
  height: 80px;
  margin-top: 10px;
  padding-left: ${(p) => p.$pad}px;
  border-left: ${(p) => (p.$rule ? '1px solid #dfe6ee' : '0')};
  color: #555;
`;

const MetaLabel = styled.div`
  margin-top: -1px;
  font: 600 10px/12px "Open Sans", sans-serif;
  color: #444;
`;

const ObsValue = styled.div`
  margin-top: 5px;
  font: 12px/18px "Open Sans", sans-serif;
  letter-spacing: 0.3px;
  b { font: 14px "DejaVu Serif", serif; }
`;

const MetaSmall = styled.div`
  font: 11px/18px "Open Sans", sans-serif;
  letter-spacing: 0.3px;
  em { font-style: normal; color: #333; }
`;

const MetaText = styled.div`
  margin-top: 3px;
  font: 12px/18px "Open Sans", sans-serif;
  letter-spacing: 0.3px;
`;

const RangeCol = styled.div`
  width: 515px;
  border-left: 1px solid #dfe6ee;
  margin-top: 10px;
  display: flex;
  flex-direction: column;
  align-items: center;
`;

const RangeLinks = styled.div`
  font: 11px/16px "Open Sans", sans-serif;
  color: #555;
  margin-top: 4px;
`;

const DateRow = styled.div`
  margin-top: 12px;
  display: flex;
  align-items: center;
  gap: 5px;
  font: 12px "Open Sans", sans-serif;
  color: #444;
`;

const DateBox = styled.div`
  width: 100px;
  height: 34px;
  border: 1px solid #dde1e6;
  border-radius: 5px;
  padding: 8px 0 0 13px;
  font-size: 11px;
  line-height: 14px;
  color: #555;
`;

const EditCol = styled.div`
  flex: 1;
  padding: 27px 5px 0 37px;
`;

const EditButton = styled.button`
  width: 107px;
  height: 36px;
  border: 0;
  border-radius: 8px;
  background: #c84f38;
  color: #fff;
  font: 12.5px "Open Sans", sans-serif;
  display: flex;
  align-items: center;
  justify-content: center;
  gap: 3px;
  padding: 0 0 2px;
  svg { font-size: 14px; }
`;

const ChartPanel = styled.div`
  height: 491px;
  flex: none;
  background: #e1e8ef;
`;

const ChartWrap = styled.div`
  position: relative;
  height: 440px;
  svg { display: block; }
`;

const ChartLegend = styled.div`
  position: absolute;
  left: 9px;
  top: 9px;
  display: flex;
  align-items: center;
`;

const SmallFred = styled.span`
  font: 900 30.5px/22px Inter, sans-serif;
  letter-spacing: -0.2px;
  color: #231f20;
  width: 83px;
`;

const LegendKey = styled.span`
  width: 16px;
  height: 2px;
  background: #4572a7;
  margin: 0 5px 0 9px;
`;

const LegendName = styled.span`
  font: 600 12px "Open Sans", sans-serif;
  color: #444;
`;

const Tooltip = styled.div`
  position: absolute;
  left: 1169px;
  top: 2px;
  width: 135px;
  height: 40px;
  border: 1.5px solid #4572a7;
  border-radius: 3px;
  background: #f7f7f7;
  box-shadow: 1px 1px 3px rgba(0, 0, 0, 0.3);
  display: flex;
  align-items: center;
  justify-content: center;
  padding-right: 2px;
`;

const TooltipText = styled.span`
  padding: 4px 5px;
  background: #fff;
  font: 11.5px "Open Sans", sans-serif;
  letter-spacing: 0.2px;
  color: #555;
  white-space: nowrap;
  b { font-weight: 600; color: #444; }
`;

const TooltipArrow = styled.span`
  position: absolute;
  left: 1230.5px;
  top: 37.5px;
  width: 9px;
  height: 9px;
  background: #f7f7f7;
  border-right: 1.5px solid #4572a7;
  border-bottom: 1.5px solid #4572a7;
  transform: rotate(45deg);
`;

const AxisText = styled.text`
  font: 11px "Open Sans", sans-serif;
  fill: #555;
`;

const AxisTitle = styled.text`
  font: 12px "Open Sans", sans-serif;
  fill: #555;
`;

const NavText = styled.text`
  font: 11px "Open Sans", sans-serif;
  fill: #666;
  fill-opacity: 0.4;
`;

const ChartFoot = styled.div`
  height: 51px;
  display: grid;
  grid-template-columns: 464px 649px 140px 14px;
  padding: 11px 0 0 29px;
  align-items: start;
  svg { margin-top: 7px; }
`;

const ShadedNote = styled.span`
  font: italic 12.8px/16px "Open Sans", sans-serif;
  color: #4a6b9c;
  margin: 4px 0 0 1px;
`;

const FootText = styled.span`
  font: 12px/16px "Open Sans", sans-serif;
  color: #333;
`;

const ShareRow = styled.div`
  height: 55px;
  flex: none;
  display: flex;
  align-items: flex-start;
  padding: 9px 17px 0 25px;
  gap: 10px;
  border-bottom: 1px solid #e3e3e3;
`;

const PillButton = styled.button`
  height: 30px;
  padding: 0 5px;
  border: 0;
  border-radius: 10px;
  background: #ececec;
  font: 12.8px "Open Sans", sans-serif;
  color: #333;
  display: flex;
  align-items: center;
  gap: 4px;
  svg { color: #888; font-size: 14px; }
`;

const SocialGroup = styled.div`
  margin-left: auto;
  display: flex;
  gap: 7px;
`;

const SocialDot = styled.span`
  width: 32px;
  height: 32px;
  border-radius: 50%;
  background: ${(p) => p.$bg};
  color: #fff;
  font-size: 17px;
  display: flex;
  align-items: center;
  justify-content: center;
`;

const Taskbar = styled.div`
  height: 40px;
  background: #3c3c3c;
  display: flex;
`;

const TaskSlot = styled.div`
  width: 48px;
  margin-right: ${(p) => (p.$small ? 0 : 1)}px;
  height: 40px;
  position: relative;
  display: flex;
  align-items: center;
  justify-content: center;
  background: ${(p) => (p.$active ? '#666' : p.$flash ? '#b06a35' : 'transparent')};
  &::after {
    content: '';
    display: ${(p) => (p.$open || p.$flash ? 'block' : 'none')};
    position: absolute;
    bottom: 0;
    left: ${(p) => (p.$active || p.$flash ? 0 : 4)}px;
    right: ${(p) => (p.$active || p.$flash ? 0 : 4)}px;
    height: 2px;
    background: ${(p) => (p.$flash ? '#f60' : '#6cb4f0')};
  }
`;

const TaskSpacer = styled.span`
  width: 3px;
`;

const Clock = styled.div`
  margin-left: auto;
  padding-right: 11px;
  display: flex;
  flex-direction: column;
  align-items: flex-end;
  justify-content: center;
  gap: 2px;
  font: 12px/16px "Open Sans", sans-serif;
  color: #fff;
`;
